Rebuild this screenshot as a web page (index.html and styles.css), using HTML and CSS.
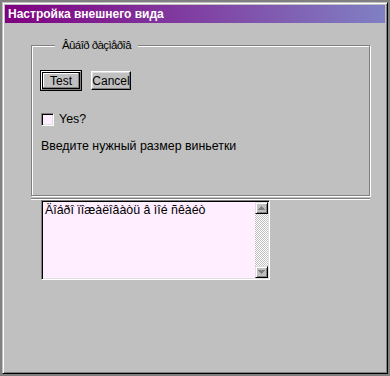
FILE: index.html
```html
<!DOCTYPE html>
<html lang="ru">

<head>
    <meta charset="UTF-8">
    <title>Настройка внешнего вида</title>
    <link rel="stylesheet" href="styles.css">
</head>

<body>

    <div class="window">

        <div class="title-bar">Настройка внешнего вида</div>

        <div class="window-body">

            <fieldset class="group">
                <legend>Âûáîð ðàçìåðîâ</legend>

                <div class="buttons">
                    <button class="btn btn-default">Test</button>
                    <button class="btn">Cancel</button>
                </div>

                <label class="check">
                    <span class="check-box"></span>
                    Yes?
                </label>

                <div class="hint">Введите нужный размер виньетки</div>
            </fieldset>

            <div class="rule"></div>

            <!-- Text box with scrollbar -->
            <div class="text-box">
                <div class="text-area">Äîáðî ïîæàëîâàòü â ìîé ñêàéò</div>
                <div class="scrollbar">
                    <div class="scroll-btn">
                        <svg width="7" height="4" viewBox="0 0 7 4">
                            <path d="M3 0h1v1h1v1h1v1h1v1H0V3h1V2h1V1h1z" fill="#808080" />
                        </svg>
                    </div>
                    <div class="scroll-track"></div>
                    <div class="scroll-btn">
                        <svg width="7" height="4" viewBox="0 0 7 4">
                            <path d="M0 0h7v1H6v1H5v1H4v1H3V3H2V2H1V1H0z" fill="#808080" />
                        </svg>
                    </div>
                </div>
            </div>

        </div>

    </div>

</body>

</html>
```

FILE: styles.css
```css
:root {
    --face: #c0c0c0;
    --shadow: #808080;
    --light: #dfdfdf;
    --pink: #ffeeff;
}

* {
    box-sizing: border-box;
}

body {
    margin: 0;
    padding: 2px;
    height: 376px;
    background: var(--shadow);
    font-family: "Liberation Sans", Arial, sans-serif;
    font-size: 12.4px;
    color: #000;
}

.window {
    width: 386px;
    height: 372px;
    padding: 2px;
    background: var(--face);
    border: 1px solid;
    border-color: var(--face) #000 #000 var(--face);
    box-shadow: inset 1px 1px #fff, inset -1px -1px var(--shadow);
}

.title-bar {
    height: 18px;
    padding-left: 3px;
    line-height: 18px;
    color: #fff;
    font-weight: bold;
    font-size: 12px;
    background: linear-gradient(to right, #800080, #8080c4);
}

.window-body {
    padding: 16px 0 0 26px;
}

.group {
    width: 339px;
    height: 157px;
    margin: 0;
    padding: 20px 0 0 9px;
    border: 1px solid var(--shadow);
    box-shadow: inset 1px 1px #fff, 1px 1px #fff;
}

.group legend {
    margin-left: 14px;
    padding: 0 7px;
    font-size: 11.5px;
    letter-spacing: -0.6px;
    background: var(--face);
}

.buttons {
    display: flex;
    gap: 10px;
}

.btn {
    width: 40px;
    height: 19px;
    padding: 0;
    font: inherit;
    font-size: 12px;
    color: #000;
    background: var(--face);
    border: 1px solid;
    border-color: #fff #000 #000 #fff;
    box-shadow: inset -1px -1px var(--shadow), inset 1px 1px var(--light);
}

.btn-default {
    outline: 1px solid #000;
    outline-offset: 0;
    border-color: #fff var(--shadow) var(--shadow) #fff;
    box-shadow: inset 0 0 0 1px #000, inset -2px -2px var(--shadow), inset 2px 2px #fff;
}

.check {
    display: flex;
    align-items: center;
    gap: 5px;
    margin-top: 22px;
}

.check-box {
    width: 13px;
    height: 13px;
    background: var(--pink);
    border: 1px solid;
    border-color: var(--shadow) #fff #fff var(--shadow);
    box-shadow: inset 1px 1px #000, inset -1px -1px var(--light);
}

.hint {
    margin-top: 13px;
}

.rule {
    width: 339px;
    margin-top: 2px;
    border-top: 1px solid var(--shadow);
    border-bottom: 1px solid #fff;
}

.text-box {
    display: flex;
    width: 229px;
    height: 80px;
    margin: 0 0 0 10px;
    background: var(--pink);
    border: 1px solid;
    border-color: var(--shadow) #fff #fff var(--shadow);
    box-shadow: inset 1px 1px #000, inset -1px -1px var(--light);
}

.text-area {
    flex: 1;
    padding: 2px 3px;
}

.scrollbar {
    display: flex;
    flex-direction: column;
    width: 13px;
    margin: 1px 1px 1px 0;
}

.scroll-btn {
    display: flex;
    align-items: center;
    justify-content: center;
    height: 12px;
    background: var(--face);
    border: 1px solid;
    border-color: var(--light) #000 #000 var(--light);
    box-shadow: inset 1px 1px #fff, inset -1px -1px var(--shadow);
}

.scroll-track {
    flex: 1;
    background: repeating-conic-gradient(var(--face) 0 25%, #fff 0 50%) 0 0 / 2px 2px;
}
```
